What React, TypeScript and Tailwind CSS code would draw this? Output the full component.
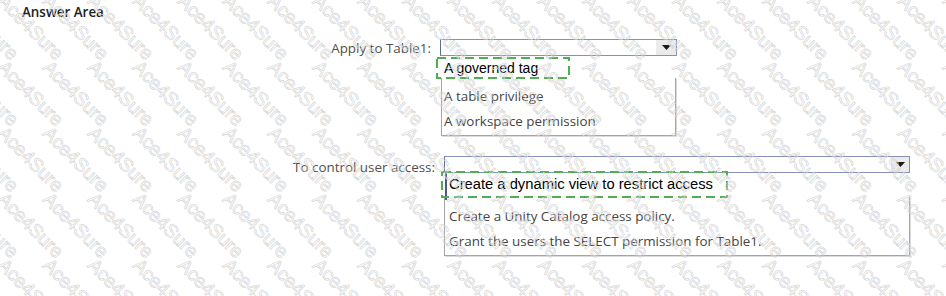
const ui = "font-['Open_Sans','Noto_Sans',sans-serif]";
const arial = "font-['Liberation_Sans',Arial,sans-serif]";

function Caret() {
  return (
    <svg width="9" height="5" viewBox="0 0 9 5">
      <path d="M0 0h9L4.5 5z" fill="#1a1a1a" />
    </svg>
  );
}

// green dashed frame drawn over the chosen answer
function DashedFrame() {
  return (
    <svg className="pointer-events-none absolute inset-0 h-full w-full overflow-visible">
      <rect x="0" y="0" width="100%" height="100%" fill="none" stroke="#4fae50" strokeWidth="2" strokeDasharray="9 5" />
    </svg>
  );
}

function Watermark() {
  const cells = Array.from({ length: 24 * 7 });
  return (
    <div aria-hidden="true" className="pointer-events-none absolute inset-0 z-10 overflow-hidden">
      <div className="-ml-[82px] -mt-[75px] grid auto-rows-[66px] grid-cols-[repeat(24,45px)]">
        {cells.map((_, i) => (
          <span
            key={i}
            className={`block w-max origin-top-left rotate-45 whitespace-nowrap text-[19px] leading-none text-transparent [-webkit-text-stroke:0.6px_#d2d2d2] ${arial}`}
          >
            Ace4Sure
          </span>
        ))}
      </div>
    </div>
  );
}

export default function App() {
  return (
    <div className={`relative h-[296px] w-[946px] overflow-hidden bg-white ${ui}`}>
      <div className="pl-[22px] pt-[3px] text-[13.4px] font-semibold leading-[18px] text-[#222]">Answer Area</div>

      {/* Apply to Table1 */}
      <div className="mt-[18px] flex">
        <div className="w-[431px] pt-[1px] text-right text-[13.4px] leading-[17px] text-[#4f4f4f]">Apply to Table1:</div>
        <div className="ml-[9px] flex w-[237px] flex-col">
          <div className="flex h-[17px] border border-[#8591b8] border-l-[#5d6a94] bg-white">
            <div className="flex-1" />
            <div className="flex w-[20px] items-center justify-center bg-[#ebebeb]">
              <Caret />
            </div>
          </div>
          <div className={`relative -ml-[3px] mt-[2px] flex h-[20px] w-[132px] items-center pl-[7px] text-[14px] text-black ${arial}`}>
            <DashedFrame />
            A governed tag
          </div>
          <div className="ml-[1px] w-[235px] border-x border-b border-[#a5a5a5] pb-[1px] pt-[6px] text-[13.4px] text-[#444] shadow-[1px_1px_0_#dcdcdc]">
            <div className="flex h-[25px] items-center pl-[2px]">A table privilege</div>
            <div className="flex h-[25px] items-center pl-[2px]">A workspace permission</div>
          </div>
        </div>
      </div>

      {/* To control user access */}
      <div className="mt-[20px] flex">
        <div className="w-[435px] pt-[3px] text-right text-[13.4px] leading-[17px] text-[#4f4f4f]">To control user access:</div>
        <div className="ml-[9px] flex w-[466px] flex-col">
          <div className="flex h-[17px] border border-[#8591b8] border-l-[#5d6a94] bg-white">
            <div className="flex-1" />
            <div className="flex w-[18px] items-center justify-center bg-[#ebebeb]">
              <Caret />
            </div>
          </div>
          <div className={`relative -ml-[2px] -mt-[1px] flex h-[25px] w-[285px] items-center pl-[7px] text-[14.75px] text-black ${arial}`}>
            <span className="absolute left-[3px] top-[1px] h-[27px] w-[1.5px] bg-[#4a568c]" />
            <DashedFrame />
            Create a dynamic view to restrict access
          </div>
          <div className="w-[466px] border-x border-b border-[#a5a5a5] pb-[1px] pt-[7px] text-[13.4px] text-[#444] shadow-[1px_1px_0_#dcdcdc]">
            <div className="flex h-[25px] items-center pl-[4px]">Create a Unity Catalog access policy.</div>
            <div className="flex h-[25px] items-center pl-[4px]">Grant the users the SELECT permission for Table1.</div>
          </div>
        </div>
      </div>

      <Watermark />
    </div>
  );
}
